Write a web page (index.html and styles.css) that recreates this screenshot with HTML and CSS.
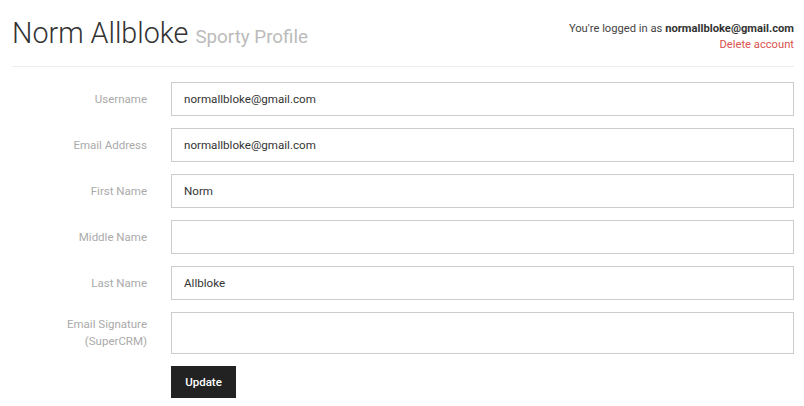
FILE: index.html
```html
<!DOCTYPE html>
<html>
<head>
<meta charset="utf-8">
<link rel="stylesheet" href="styles.css">
</head>
<body>
<div class="page">
  <header class="header">
    <h1 class="title">Norm Allbloke <small class="subtitle">Sporty Profile</small></h1>
    <div class="account">
      <div>You're logged in as <strong>normallbloke@gmail.com</strong></div>
      <a class="delete" href="#">Delete account</a>
    </div>
  </header>
  <form class="form">
    <div class="row">
      <label class="label">Username</label>
      <div class="field"><input class="input" type="text" value="normallbloke@gmail.com"></div>
    </div>
    <div class="row">
      <label class="label">Email Address</label>
      <div class="field"><input class="input" type="text" value="normallbloke@gmail.com"></div>
    </div>
    <div class="row">
      <label class="label">First Name</label>
      <div class="field"><input class="input" type="text" value="Norm"></div>
    </div>
    <div class="row">
      <label class="label">Middle Name</label>
      <div class="field"><input class="input" type="text" value=""></div>
    </div>
    <div class="row">
      <label class="label">Last Name</label>
      <div class="field"><input class="input" type="text" value="Allbloke"></div>
    </div>
    <div class="row">
      <label class="label label-multi">Email Signature<br>(SuperCRM)</label>
      <div class="field"><textarea class="input textarea"></textarea></div>
    </div>
    <div class="row">
      <div class="label"></div>
      <div class="field"><button class="button" type="button">Update</button></div>
    </div>
  </form>
</div>
</body>
</html>
```

FILE: styles.css
```css
html, body {
  margin: 0;
  padding: 0;
  background: #fff;
}
body {
  font-family: Roboto, "Liberation Sans", sans-serif;
  color: #333;
  font-size: 12px;
}
.page {
  padding: 0 10px 0 12px;
}
.header {
  display: flex;
  justify-content: space-between;
  align-items: flex-start;
  border-bottom: 1px solid #eee;
  height: 67px;
  box-sizing: border-box;
}
.title {
  margin: 15px 0 0 0;
  font-weight: 300;
  font-size: 28.7px;
  line-height: 36px;
  color: #333;
}
.subtitle {
  font-size: 18.8px;
  color: #bbb;
  font-weight: 400;
}
.account {
  margin-top: 21px;
  text-align: right;
  font-size: 11.2px;
  line-height: 16px;
  color: #444;
}
.account strong {
  font-weight: 700;
  color: #333;
}
.delete {
  color: #d9534f;
  text-decoration: none;
}
.form {
  padding-top: 15px;
}
.row {
  display: flex;
  align-items: center;
  margin-bottom: 12px;
}
.label {
  width: 159px;
  box-sizing: border-box;
  flex: none;
  text-align: right;
  color: #aaa;
  font-size: 11.5px;
  line-height: 16px;
  padding-right: 24px;
}
.label-multi {
  line-height: 17px;
}
.field {
  flex: 1;
  display: flex;
}
.input {
  flex: 1;
  height: 34px;
  box-sizing: border-box;
  border: 1px solid #ccc;
  border-radius: 0;
  padding: 0 12px;
  font-family: Roboto, "Liberation Sans", sans-serif;
  font-size: 11.6px;
  color: #333;
  outline: none;
  margin: 0;
}
.textarea {
  height: 42px;
  resize: none;
  padding: 8px 12px;
}
.button {
  background: #222;
  color: #fff;
  border: 0;
  border-radius: 0;
  height: 32px;
  width: 65px;
  font-family: Roboto, "Liberation Sans", sans-serif;
  font-size: 11.5px;
  font-weight: 500;
  padding: 0;
}
```
